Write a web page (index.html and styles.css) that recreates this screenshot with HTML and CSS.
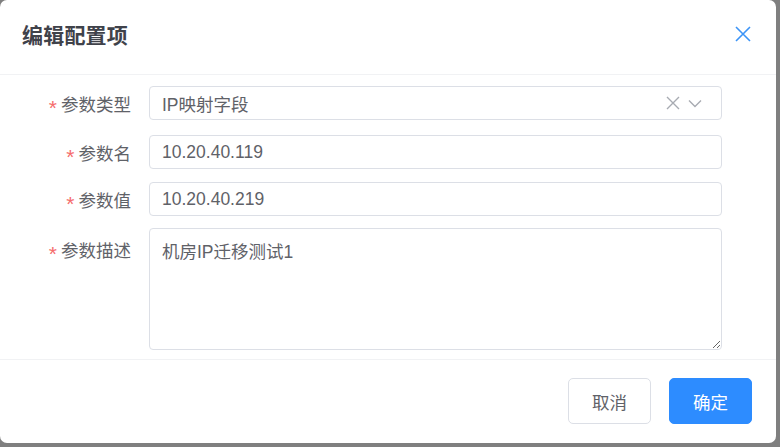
FILE: index.html
```html
<!DOCTYPE html>
<html lang="zh-CN">
<head>
<meta charset="utf-8">
<title>编辑配置项</title>
<link rel="stylesheet" href="styles.css">
</head>
<body>
<div class="dialog">
  <div class="header">
    <span class="title">编辑配置项</span>
    <svg class="close" width="16" height="16" viewBox="0 0 16 16"><path d="M1 1L15 15M15 1L1 15" stroke="#3c94f7" stroke-width="1.6" fill="none"/></svg>
  </div>
  <div class="body">
    <div class="row">
      <label class="label"><span class="req">*</span>参数类型</label>
      <div class="control select">
        <span class="value">IP映射字段</span>
        <span class="icons">
          <svg width="14" height="14" viewBox="0 0 14 14"><path d="M1 1L13 13M13 1L1 13" stroke="#a8abb2" stroke-width="1.4" fill="none"/></svg>
          <svg width="14" height="9" viewBox="0 0 14 9"><path d="M1 1.5L7 7.5L13 1.5" stroke="#a8abb2" stroke-width="1.4" fill="none"/></svg>
        </span>
      </div>
    </div>
    <div class="row row-2">
      <label class="label"><span class="req">*</span>参数名</label>
      <div class="control input"><span class="value">10.20.40.119</span></div>
    </div>
    <div class="row">
      <label class="label"><span class="req">*</span>参数值</label>
      <div class="control input"><span class="value">10.20.40.219</span></div>
    </div>
    <div class="row row-4">
      <label class="label label-top"><span class="req">*</span>参数描述</label>
      <textarea class="control textarea">机房IP迁移测试1</textarea>
    </div>
  </div>
  <div class="footer">
    <button class="btn btn-default">取消</button>
    <button class="btn btn-primary">确定</button>
  </div>
</div>
</body>
</html>
```

FILE: styles.css
```css
html, body {
  margin: 0;
  padding: 0;
}
body {
  background: #7f7f7f;
  width: 780px;
  height: 447px;
  overflow: hidden;
  font-family: "Liberation Sans", "Noto Sans CJK SC", sans-serif;
}
.dialog {
  width: 776px;
  height: 443px;
  background: #fff;
  border-radius: 7px;
  display: flex;
  flex-direction: column;
  box-sizing: border-box;
}
.header {
  height: 75px;
  flex: none;
  box-sizing: border-box;
  padding: 0 25px 6px 22px;
  display: flex;
  align-items: center;
  justify-content: space-between;
  border-bottom: 1px solid #f1f2f4;
}
.title {
  font-size: 21px;
  font-weight: bold;
  color: #3f424a;
  letter-spacing: 0.2px;
}
.close {
  display: block;
}
.body {
  flex: none;
  padding: 11px 54px 9px 0;
  border-bottom: 1px solid #f1f2f4;
  display: flex;
  flex-direction: column;
  gap: 13px;
}
.row-2 {
  margin-top: 2px;
}
.row-4 {
  margin-top: -1px;
}
.row {
  display: flex;
  align-items: flex-start;
}
.label {
  width: 149px;
  height: 34px;
  box-sizing: border-box;
  padding-right: 18px;
  display: flex;
  align-items: center;
  justify-content: flex-end;
  font-size: 17.5px;
  color: #5f6268;
  white-space: nowrap;
}
.label-top {
  margin-top: 4px;
}
.req {
  color: #f56c6c;
  font-size: 21px;
  line-height: 1;
  margin-right: 4px;
  padding-top: 9px;
}
.control {
  flex: 1;
  height: 34px;
  box-sizing: border-box;
  border: 1px solid #dcdfe6;
  border-radius: 4px;
  background: #fff;
  font-family: "Liberation Sans", "Noto Sans CJK SC", sans-serif;
  font-size: 17.5px;
  color: #5f6268;
  display: flex;
  align-items: center;
  padding: 0 12px;
}
.select {
  justify-content: space-between;
  padding-right: 19px;
}
.icons {
  display: flex;
  align-items: center;
  gap: 8px;
}
.icons svg {
  display: block;
}
.textarea {
  height: 122px;
  display: block;
  padding: 10px 12px;
  line-height: 26px;
  resize: vertical;
  outline: none;
}
.footer {
  flex: 1;
  display: flex;
  justify-content: flex-end;
  align-items: flex-start;
  padding: 18px 24px 0 0;
  gap: 18px;
}
.btn {
  width: 83px;
  height: 46px;
  border-radius: 5px;
  font-family: "Liberation Sans", "Noto Sans CJK SC", sans-serif;
  font-size: 17.5px;
  box-sizing: border-box;
  cursor: pointer;
}
.btn-default {
  background: #fff;
  border: 1px solid #dcdfe6;
  color: #5f6268;
}
.btn-primary {
  background: #2d8cff;
  border: 1px solid #2d8cff;
  color: #fff;
}
```
